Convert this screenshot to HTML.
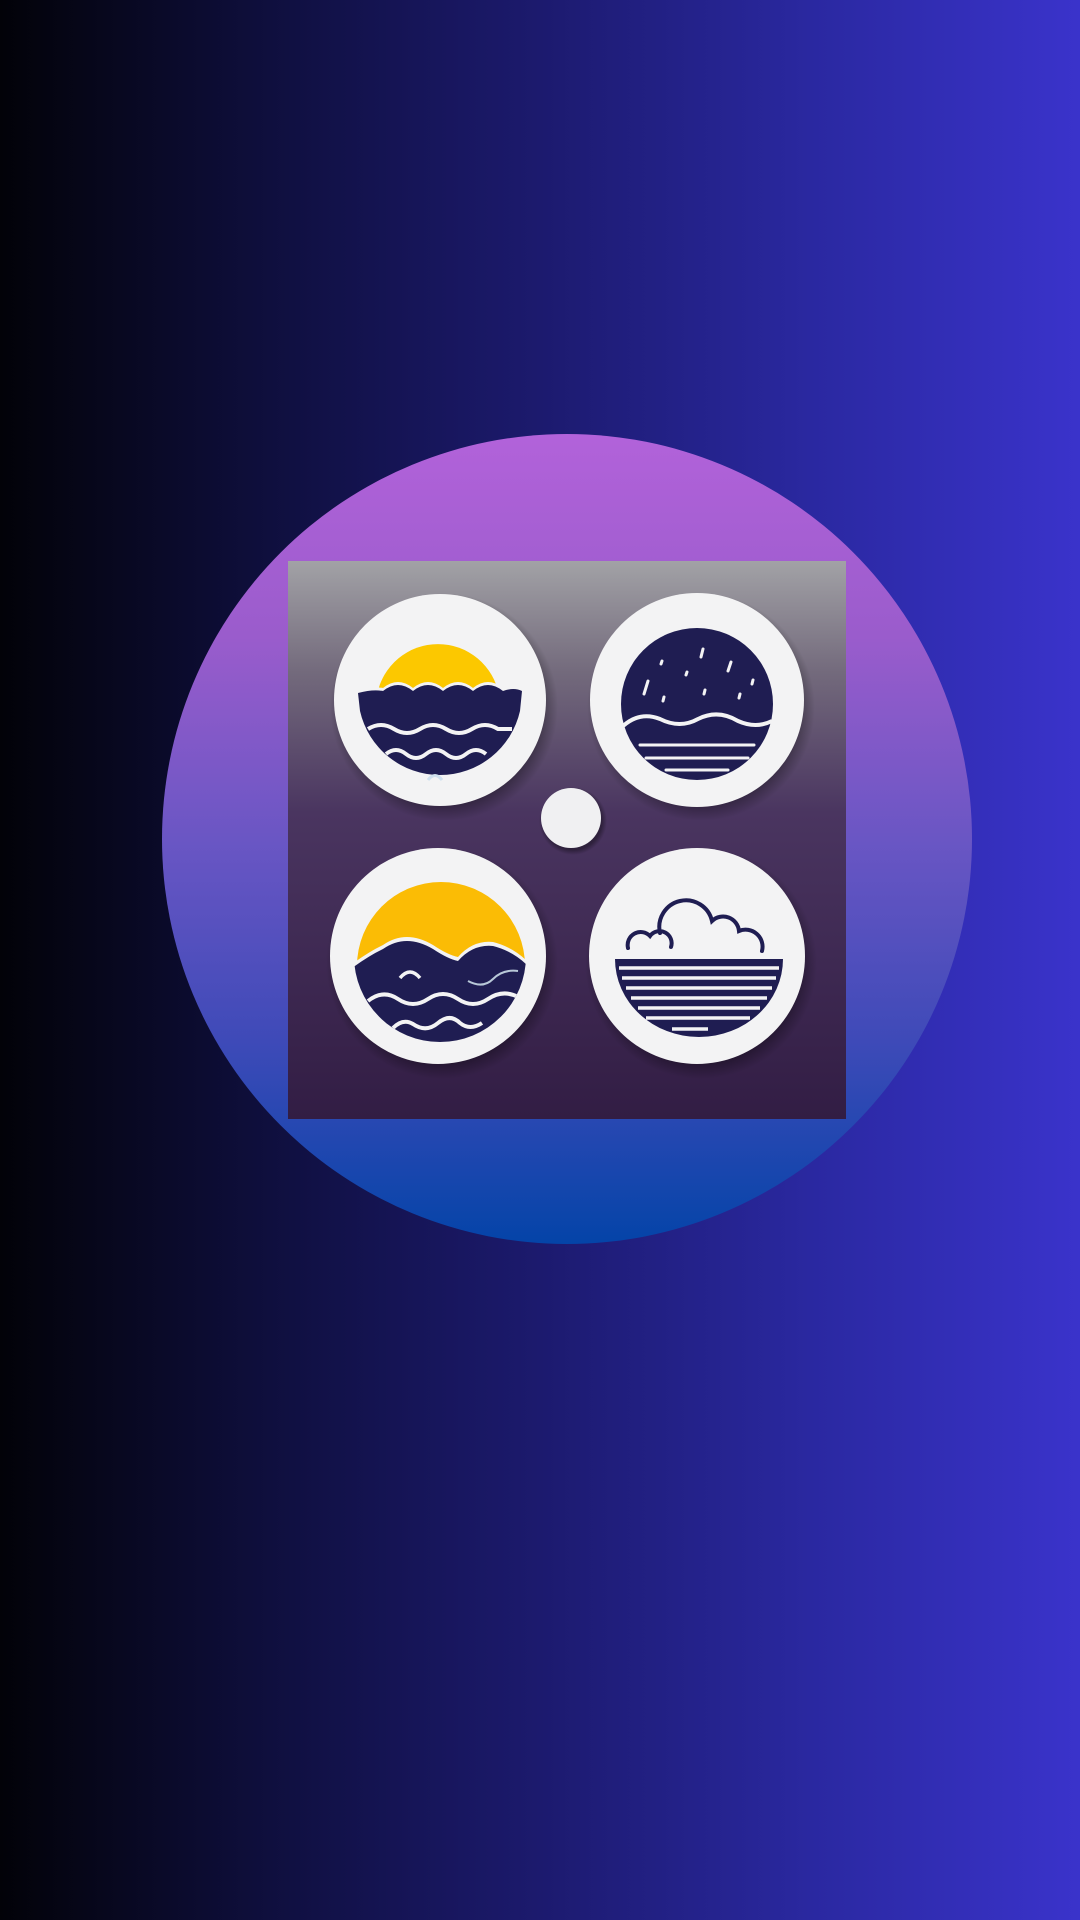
<!DOCTYPE html>
<html><head><meta charset="utf-8"><style>
html,body{margin:0;padding:0;width:1080px;height:1920px;overflow:hidden;}
body{background:linear-gradient(90deg,#020208 0%,#0f0f3e 25%,#1c1a6e 50%,#2a28a0 75%,#3a33cb 100%);position:relative;}
.c{position:absolute;left:162px;top:434px;width:810px;height:810px;border-radius:50%;background:linear-gradient(180deg,#b262da 0%,#9a5ccc 25%,#6a56c4 50%,#3e4ab8 75%,#0444a8 100%);}
svg{position:absolute;left:288px;top:561px;}
</style></head><body>
<div class="c"></div>
<svg width="558" height="558" viewBox="0 0 558 558">
<defs>
<linearGradient id="bg" x1="0" y1="0" x2="0" y2="1">
<stop offset="0" stop-color="#a2a2a6"/><stop offset="0.2" stop-color="#736a7c"/><stop offset="0.45" stop-color="#4a3560"/><stop offset="1" stop-color="#321d44"/></linearGradient>
<radialGradient id="sh"><stop offset="0.85" stop-color="#000" stop-opacity="0.35"/><stop offset="1" stop-color="#000" stop-opacity="0"/></radialGradient>
<clipPath id="c3"><circle cx="152" cy="395" r="86"/></clipPath>
</defs>
<rect width="558" height="558" fill="url(#bg)"/>
<g>
<circle cx="156" cy="146" r="114" fill="url(#sh)"/>
<circle cx="413" cy="146" r="114" fill="url(#sh)"/>
<circle cx="154" cy="402" r="116" fill="url(#sh)"/>
<circle cx="413" cy="402" r="116" fill="url(#sh)"/>
<circle cx="285" cy="260" r="34" fill="url(#sh)"/>
</g>
<circle cx="152" cy="139" r="106" fill="#f3f3f4"/>
<circle cx="409" cy="139" r="107" fill="#f3f3f4"/>
<circle cx="150" cy="395" r="108" fill="#f3f3f4"/>
<circle cx="409" cy="395" r="108" fill="#f3f3f4"/>
<circle cx="283" cy="257" r="30" fill="#f0f0f2"/>
<!-- TL -->
<path d="M89 134 A62 62 0 0 1 211 134 Z" fill="#fcc800"/>
<path d="M70 132 Q85 128 95 130 Q110 118 125 130 Q140 118 155 130 Q170 118 185 130 Q200 118 215 130 Q226 126 234 130 L232 150 A82 82 0 0 1 72 150 Z" fill="#f3f3f4" transform="translate(0,-3)"/>
<path d="M70 132 Q85 128 95 130 Q110 118 125 130 Q140 118 155 130 Q170 118 185 130 Q200 118 215 130 Q226 126 234 130 L232 150 A82 82 0 0 1 72 150 Z" fill="#1f1d52"/>
<path d="M80 168 Q93 160 106 168 Q119 176 132 168 Q145 160 158 168 Q171 176 184 168 Q197 160 210 168 L224 168" stroke="#f3f3f4" stroke-width="4" fill="none"/>
<path d="M98 193 Q108 185 118 193 Q128 201 138 193 Q148 185 158 193 Q168 201 178 193 Q188 185 198 193" stroke="#f3f3f4" stroke-width="4" fill="none"/>
<path d="M140 219 Q147 210 154 219" stroke="#cfe0ee" stroke-width="3" fill="none"/>
<!-- TR -->
<circle cx="409" cy="143" r="76" fill="#1f1d52"/>
<path d="M335 165 Q352 150 372 158 Q392 168 410 158 Q430 148 450 160 Q468 168 484 160" stroke="#f3f3f4" stroke-width="4" fill="none"/>
<g stroke="#f3f3f4" stroke-width="3" stroke-linecap="round">
<line x1="352" y1="184" x2="466" y2="184"/><line x1="358" y1="197" x2="460" y2="197"/><line x1="378" y1="209" x2="440" y2="209"/>
<line x1="415" y1="88" x2="413" y2="96"/><line x1="443" y1="101" x2="440" y2="110"/><line x1="360" y1="120" x2="356" y2="133"/>
<line x1="374" y1="100" x2="373" y2="103"/><line x1="399" y1="111" x2="398" y2="114"/><line x1="465" y1="119" x2="464" y2="123"/>
<line x1="376" y1="136" x2="375" y2="140"/><line x1="417" y1="129" x2="416" y2="133"/><line x1="452" y1="133" x2="451" y2="137"/>
</g>
<!-- BL -->
<path d="M69 405 A84 84 0 0 1 237 405 Z" fill="#fbbc05"/>
<g clip-path="url(#c3)">
<path d="M60 410 Q80 395 95 388 Q118 372 145 388 Q160 398 170 400 Q185 383 205 385 Q225 390 240 405 L240 500 L60 500 Z" fill="#f3f3f4" transform="translate(0,-4)"/>
<path d="M60 410 Q80 395 95 388 Q118 372 145 388 Q160 398 170 400 Q185 383 205 385 Q225 390 240 405 L240 500 L60 500 Z" fill="#1f1d52"/>
<path d="M80 440 Q95 428 110 438 Q125 448 140 438 Q155 428 170 438 Q185 448 200 438 Q215 428 230 436" stroke="#f3f3f4" stroke-width="4" fill="none"/>
<path d="M105 467 Q115 457 125 463 Q138 472 150 462 Q162 452 172 462 Q182 470 194 462" stroke="#f3f3f4" stroke-width="4" fill="none"/>
<path d="M112 417 Q122 405 132 417" stroke="#f3f3f4" stroke-width="3.5" fill="none"/>
<path d="M180 420 Q195 428 205 418 Q215 408 230 410" stroke="#b8c8d8" stroke-width="2" fill="none"/>
</g>
<!-- BR -->
<path d="M327 398 L495 398 A84 78 0 0 1 327 398 Z" fill="#1f1d52"/>
<g stroke="#f3f3f4" stroke-width="3.5">
<line x1="331" y1="407" x2="491" y2="407"/><line x1="334" y1="417" x2="488" y2="417"/><line x1="338" y1="427" x2="484" y2="427"/><line x1="343" y1="437" x2="479" y2="437"/><line x1="350" y1="447" x2="472" y2="447"/><line x1="358" y1="457" x2="462" y2="457"/><line x1="384" y1="468" x2="420" y2="468"/>
</g>
<path d="M340 387 A13 13 0 0 1 362 375 A12 12 0 0 1 383 386 M372 372 A26 26 0 0 1 424 360 A16 16 0 0 1 451 370 A17 17 0 0 1 474 390" stroke="#1f1d52" stroke-width="4" fill="none" stroke-linecap="round"/>
</svg>
</body></html>
